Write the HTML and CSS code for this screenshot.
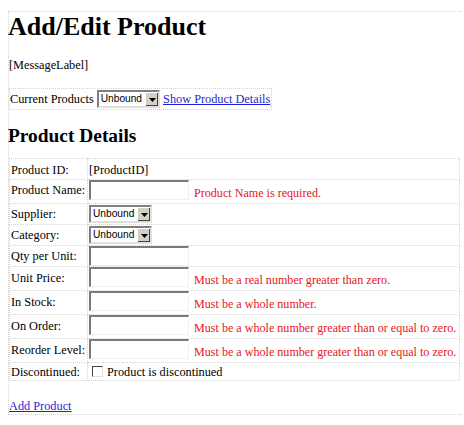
FILE: index.html
```html
<!DOCTYPE html>
<html>
<head>
<meta charset="utf-8">
<link rel="stylesheet" href="styles.css">
</head>
<body>
<div class="page">
  <h1 class="title">Add/Edit Product</h1>
  <p class="msg">[MessageLabel]</p>
  <div class="panel">
    <span>Current Products</span>
    <span class="ddl"><span class="ddl-text">Unbound</span><span class="ddl-btn"><svg width="7" height="4" viewBox="0 0 7 4"><path d="M0 0H7L3.5 4Z" fill="#000"/></svg></span></span>
    <a href="#" class="link">Show Product Details</a>
  </div>
  <h2 class="sub">Product Details</h2>
  <table class="form">
    <tr class="r-id"><td class="lbl">Product ID:</td><td class="val"><div class="field">[ProductID]</div></td></tr>
    <tr class="r-box r-first"><td class="lbl">Product Name:</td><td class="val"><div class="field"><span class="tb"></span><span class="err">Product Name is required.</span></div></td></tr>
    <tr class="r-ddl"><td class="lbl">Supplier:</td><td class="val"><div class="field"><span class="ddl"><span class="ddl-text">Unbound</span><span class="ddl-btn"><svg width="7" height="4" viewBox="0 0 7 4"><path d="M0 0H7L3.5 4Z" fill="#000"/></svg></span></span></div></td></tr>
    <tr class="r-ddl"><td class="lbl">Category:</td><td class="val"><div class="field"><span class="ddl"><span class="ddl-text">Unbound</span><span class="ddl-btn"><svg width="7" height="4" viewBox="0 0 7 4"><path d="M0 0H7L3.5 4Z" fill="#000"/></svg></span></span></div></td></tr>
    <tr class="r-plain"><td class="lbl">Qty per Unit:</td><td class="val"><div class="field"><span class="tb"></span></div></td></tr>
    <tr class="r-box"><td class="lbl">Unit Price:</td><td class="val"><div class="field"><span class="tb"></span><span class="err">Must be a real number greater than zero.</span></div></td></tr>
    <tr class="r-box"><td class="lbl">In Stock:</td><td class="val"><div class="field"><span class="tb"></span><span class="err">Must be a whole number.</span></div></td></tr>
    <tr class="r-box"><td class="lbl">On Order:</td><td class="val"><div class="field"><span class="tb"></span><span class="err">Must be a whole number greater than or equal to zero.</span></div></td></tr>
    <tr class="r-box"><td class="lbl">Reorder Level:</td><td class="val"><div class="field"><span class="tb"></span><span class="err">Must be a whole number greater than or equal to zero.</span></div></td></tr>
    <tr class="r-last"><td class="lbl">Discontinued:</td><td class="val"><div class="field"><span class="cb"></span>Product is discontinued</div></td></tr>
  </table>
  <div class="footer"><a href="#" class="link">Add Product</a></div>
</div>
</body>
</html>
```

FILE: styles.css
```css
html, body {
  margin: 0;
  padding: 0;
  background: #fff;
}
body {
  padding: 11px 2px 0 8px;
  font-family: "Liberation Serif", "Times New Roman", serif;
  font-size: 12.3px;
  color: #000;
}
.page {
  border: 1px dotted #d4d4d4;
  border-right: none;
}
.title {
  font-size: 26px;
  font-weight: bold;
  margin: 0 0 15px -1px;
  line-height: 30px;
}
.msg {
  margin: 0 0 15px 0;
  line-height: 16px;
}
.panel {
  display: inline-flex;
  align-items: center;
  gap: 3px;
  height: 20px;
  padding: 0 1px 0 0;
  border: 1px dotted #d4d4d4;
}
.link {
  color: #1f1fd6;
  text-decoration: underline;
}
.ddl {
  display: inline-flex;
  align-items: stretch;
  height: 14px;
  border: 2px solid;
  border-color: #808080 #e0e0e0 #e0e0e0 #808080;
  background: #fff;
  font-family: "Liberation Sans", Arial, sans-serif;
  font-size: 10.2px;
  line-height: 14px;
}
.ddl-text {
  padding: 0 3px 0 2px;
}
.ddl-btn {
  width: 12px;
  display: flex;
  align-items: center;
  justify-content: center;
  background: #d4d0c8;
  border-left: 1px solid #fff;
  border-top: 1px solid #fff;
  box-shadow: inset -1px -1px 0 #404040;
}
.sub {
  font-size: 19.4px;
  font-weight: bold;
  margin: 14px 0 11px -1px;
  line-height: 23px;
}
.form {
  border-collapse: collapse;
  width: 451px;
}
.form td {
  border: 1px dotted #d4d4d4;
  padding: 0 1px;
  white-space: nowrap;
  vertical-align: middle;
  line-height: 14px;
}
.lbl {
  width: 75px;
}
.val {
  padding-left: 0;
}
.field {
  display: flex;
  align-items: center;
}
.r-id .field { height: 20px; padding-top: 2px; box-sizing: border-box; }
.r-id .lbl { padding-top: 2px; }
.r-box .field { height: 23px; align-items: flex-start; }
.r-box .lbl { padding-bottom: 2px; }
.r-first .lbl { padding-bottom: 4px; }
.r-ddl .field { height: 20px; }
.r-plain .field { height: 20px; align-items: flex-start; }
.r-last .field { height: 17px; }
.tb {
  display: block;
  width: 97px;
  height: 17px;
  border-style: solid;
  border-color: #7a7a7a #f0f0f0 #f0f0f0 #7a7a7a;
  border-width: 2px 1px 1px 2px;
  background: #fff;
}
.err {
  color: #e8151c;
  margin-left: 5px;
  margin-top: 5px;
  line-height: 16px;
  font-size: 12.1px;
}
.cb {
  display: inline-block;
  width: 9px;
  height: 9px;
  border: 1px solid;
  border-color: #404040 #e0e0e0 #e0e0e0 #404040;
  margin: 0 4px 0 3px;
}
.footer {
  padding-top: 17px;
  line-height: 16px;
  padding-bottom: 0;
}
```
